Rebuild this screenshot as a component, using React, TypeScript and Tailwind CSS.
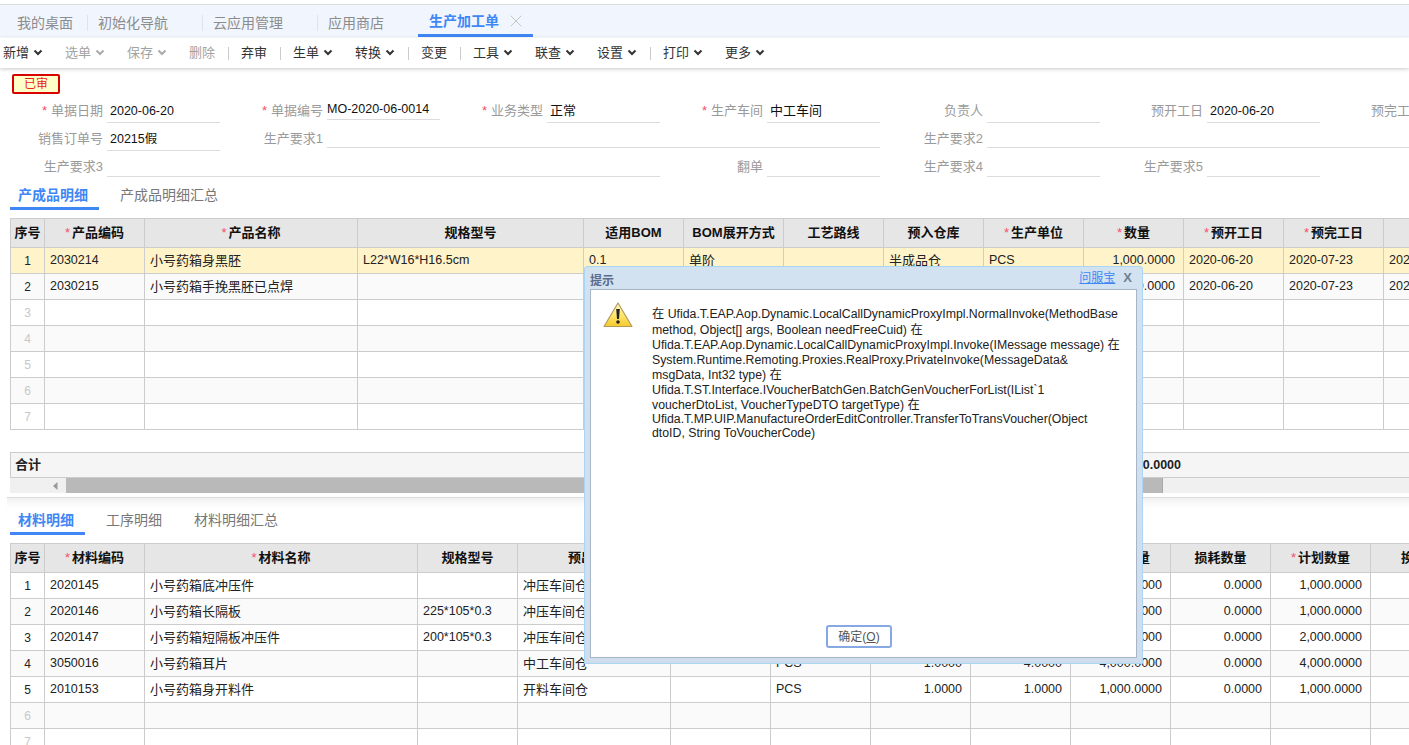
import React from "react";
import { X } from "lucide-react";

const FONT = "font-['Liberation_Sans','Noto_Sans_CJK_SC',sans-serif]";

const Chev = ({ c = "#333" }: { c?: string }) => (
  <svg width="10" height="7" viewBox="0 0 10 7" className="ml-[4px] mt-[-2px]">
    <path d="M1.5 1.5 L5 5 L8.5 1.5" fill="none" stroke={c} strokeWidth="2" />
  </svg>
);

const Sep = () => <span className="w-px h-[13px] bg-[#ccc] ml-[13px] mr-[12px]" />;

function Toolbar() {
  const items: [string, boolean, boolean, boolean][] = [
    ["新增", true, false, false],
    ["选单", true, true, false],
    ["保存", true, true, false],
    ["删除", false, true, true],
    ["弃审", false, false, true],
    ["生单", true, false, false],
    ["转换", true, false, true],
    ["变更", false, false, true],
    ["工具", true, false, false],
    ["联查", true, false, false],
    ["设置", true, false, true],
    ["打印", true, false, false],
    ["更多", true, false, false],
  ];
  return (
    <div className="relative z-10 h-[30px] bg-white flex items-center pl-[3px] shadow-[0_1px_4px_rgba(0,0,0,0.22)] mt-px">
      {items.map(([t, chev, dis, sep]) => (
        <React.Fragment key={t}>
          <span className={`flex items-center whitespace-nowrap text-[13px] leading-[20px] ${chev ? "w-[40px]" : "w-[26px]"} ${dis ? "text-[#a3a3a3]" : "text-[#333]"}`}>
            {t}
            {chev && <Chev c={dis ? "#aaa" : "#333"} />}
          </span>
          {sep ? <Sep /> : chev ? <span className="w-[22px]" /> : null}
        </React.Fragment>
      ))}
    </div>
  );
}

function TopTabs() {
  return (
    <div className="h-[33px] bg-[#f0f5fe] border-t border-[#dcdcdc] flex items-stretch text-[14px] text-[#8c8c8c]">
      <div className="pl-[17px] pr-[14px] flex items-center pt-[4px]">我的桌面</div>
      {["初始化导航", "云应用管理", "应用商店"].map((t) => (
        <div key={t} className="relative pl-[11px] pr-[34px] flex items-center pt-[4px] whitespace-nowrap">
          <span className="absolute left-0 top-[10px] w-px h-[16px] bg-[#dfe3ea]" />
          {t}
        </div>
      ))}
      <div className="w-[115px] h-[32px] pl-[11px] pt-[3px] border-b-[3px] border-[#3f87f5] flex items-center font-bold text-[#3f87f5] whitespace-nowrap">
        生产加工单
        <X size={20} strokeWidth={1.2} className="ml-[7px] text-[#c4c4c4]" />
      </div>
    </div>
  );
}

type FieldProps = { label: string; star?: boolean; value?: string; latin?: boolean; span?: string; shorter?: boolean; nopad?: boolean };

function Field({ label, star, value, latin, span = "", shorter, nopad }: FieldProps) {
  return (
    <div className={`flex items-start h-full ${span}`}>
      <div className="w-[103px] shrink-0 text-right text-[13px] text-[#9a9a9a] whitespace-nowrap leading-[22px]">
        {star && <span className="text-[#f4506a] mr-[4px]">*</span>}
        {label}
      </div>
      <div
        className={`ml-[4px] flex-1 border-b border-[#dcdcdc] whitespace-nowrap text-[#111] ${shorter ? "h-[20px] leading-[18px]" : "h-full leading-[22px]"} ${nopad ? "" : "pl-[3px]"} ${latin ? "text-[12.5px]" : "text-[13px]"}`}
      >
        {value}
      </div>
    </div>
  );
}

function Form() {
  return (
    <div className="mt-[6px] w-[1540px] grid grid-cols-[repeat(7,220px)] grid-rows-[23px_23px_21px] gap-y-[5px]">
      <Field label="单据日期" star value="2020-06-20" latin />
      <Field label="单据编号" star value="MO-2020-06-0014" latin shorter nopad />
      <Field label="业务类型" star value="正常" />
      <Field label="生产车间" star value="中工车间" />
      <Field label="负责人" />
      <Field label="预开工日" value="2020-06-20" latin />
      <Field label="预完工日" />

      <Field label="销售订单号" value="20215假" latin />
      <Field label="生产要求1" span="col-span-3" shorter />
      <Field label="生产要求2" span="col-span-3" shorter />

      <Field label="生产要求3" span="col-span-3" />
      <Field label="翻单" />
      <Field label="生产要求4" />
      <Field label="生产要求5" />
    </div>
  );
}

function SubTabs({ tabs, h }: { tabs: string[]; h: string }) {
  return (
    <div className={`ml-[10px] flex ${h}`}>
      {tabs.map((t, i) => (
        <div
          key={t}
          className={`flex items-end text-[14px] leading-[18px] pl-[8px] pr-[11px] pb-[3px] border-b-[3px] ${i === 0 ? "border-[#3f87f5] font-bold text-[#3f87f5]" : "ml-[13px] border-transparent text-[#777]"}`}
        >
          {t}
        </div>
      ))}
    </div>
  );
}

type Col = { t: string; star?: boolean; w: string };
type Cell = { v: string; right?: boolean; latin?: boolean };

const L = (v: string): Cell => ({ v, latin: true });
const R = (v: string): Cell => ({ v, latin: true, right: true });
const C = (v: string): Cell => ({ v });
const E: Cell = { v: "" };

function Grid({ cols, rows, total, width, hl }: { cols: Col[]; rows: Cell[][]; total: number; width: string; hl?: boolean }) {
  return (
    <div className="ml-[10px] mt-[8px] overflow-hidden">
      <table className={`table-fixed border-collapse ${width}`}>
        <colgroup>
          {cols.map((c, i) => (
            <col key={i} className={c.w} />
          ))}
        </colgroup>
        <thead>
          <tr className="h-[29px] bg-[#e6e6e6]">
            {cols.map((c, i) => (
              <th key={i} className="border border-[#ccc] text-[13px] font-bold text-[#111] whitespace-nowrap overflow-hidden p-0 text-center">
                {c.star && <span className="text-[#f4506a] font-normal mr-[2px]">*</span>}
                {c.t}
              </th>
            ))}
          </tr>
        </thead>
        <tbody>
          {Array.from({ length: total }).map((_, r) => {
            const row = rows[r];
            const bg = hl && r === 0 ? "bg-[#fff3c9]" : r % 2 === 1 ? "bg-[#fafafa]" : "bg-white";
            return (
              <tr key={r} className={`h-[26px] ${bg}`}>
                <td className={`border border-[#ccc] text-center text-[12px] p-0 ${row ? "text-[#222]" : "text-[#c8c8c8]"}`}>{r + 1}</td>
                {cols.slice(1).map((_, i) => {
                  const c = row?.[i] ?? E;
                  return (
                    <td
                      key={i}
                      className={`border border-[#ccc] whitespace-nowrap overflow-hidden text-[#222] p-0 ${c.right ? "text-right pr-[8px]" : "text-left pl-[5px]"} ${c.latin ? "text-[12.5px]" : "text-[13px]"}`}
                    >
                      {c.v}
                    </td>
                  );
                })}
              </tr>
            );
          })}
        </tbody>
      </table>
    </div>
  );
}

const cols1: Col[] = [
  { t: "序号", w: "w-[34px]" },
  { t: "产品编码", star: true, w: "w-[100px]" },
  { t: "产品名称", star: true, w: "w-[213px]" },
  { t: "规格型号", w: "w-[226px]" },
  { t: "适用BOM", w: "w-[100px]" },
  { t: "BOM展开方式", w: "w-[100px]" },
  { t: "工艺路线", w: "w-[100px]" },
  { t: "预入仓库", w: "w-[100px]" },
  { t: "生产单位", star: true, w: "w-[100px]" },
  { t: "数量", star: true, w: "w-[100px]" },
  { t: "预开工日", star: true, w: "w-[100px]" },
  { t: "预完工日", star: true, w: "w-[100px]" },
  { t: "", w: "w-[100px]" },
];

const rows1: Cell[][] = [
  [L("2030214"), C("小号药箱身黑胚"), L("L22*W16*H16.5cm"), L("0.1"), C("单阶"), E, C("半成品仓"), L("PCS"), R("1,000.0000"), L("2020-06-20"), L("2020-07-23"), L("2020-07-23")],
  [L("2030215"), C("小号药箱手挽黑胚已点焊"), E, L("0.1"), C("单阶"), E, C("半成品仓"), L("PCS"), R("2,000.0000"), L("2020-06-20"), L("2020-07-23"), L("2020-07-23")],
];

const cols2: Col[] = [
  { t: "序号", w: "w-[34px]" },
  { t: "材料编码", star: true, w: "w-[100px]" },
  { t: "材料名称", star: true, w: "w-[273px]" },
  { t: "规格型号", w: "w-[100px]" },
  { t: "预出仓库", w: "w-[153px]" },
  { t: "批号", w: "w-[100px]" },
  { t: "单位", w: "w-[100px]" },
  { t: "单耗", w: "w-[100px]" },
  { t: "倍数", w: "w-[100px]" },
  { t: "需求数量", star: true, w: "w-[100px]" },
  { t: "损耗数量", w: "w-[100px]" },
  { t: "计划数量", star: true, w: "w-[100px]" },
  { t: "换算率", w: "w-[100px]" },
];

const mat = (code: string, name: string, spec: string, wh: string, a: string, b: string, c: string, d: string): Cell[] => [
  L(code), C(name), L(spec), C(wh), E, L("PCS"), R(a), R(b), R(c), R("0.0000"), R(d),
];

const rows2: Cell[][] = [
  mat("2020145", "小号药箱底冲压件", "", "冲压车间仓", "1.0000", "1.0000", "1,000.0000", "1,000.0000"),
  mat("2020146", "小号药箱长隔板", "225*105*0.3", "冲压车间仓", "1.0000", "1.0000", "1,000.0000", "1,000.0000"),
  mat("2020147", "小号药箱短隔板冲压件", "200*105*0.3", "冲压车间仓", "1.0000", "2.0000", "2,000.0000", "2,000.0000"),
  mat("3050016", "小号药箱耳片", "", "中工车间仓", "1.0000", "4.0000", "4,000.0000", "4,000.0000"),
  mat("2010153", "小号药箱身开料件", "", "开料车间仓", "1.0000", "1.0000", "1,000.0000", "1,000.0000"),
];

function Warn() {
  return (
    <svg width="30" height="26" viewBox="0 0 30 26" className="shrink-0">
      <defs>
        <linearGradient id="wg" x1="0" y1="0" x2="0" y2="1">
          <stop offset="0" stopColor="#fff8c8" />
          <stop offset="0.55" stopColor="#fde468" />
          <stop offset="1" stopColor="#f5c92e" />
        </linearGradient>
      </defs>
      <path d="M15 1 L29 24.5 L1 24.5 Z" fill="url(#wg)" stroke="#b59a5c" strokeWidth="1.2" strokeLinejoin="round" />
      <path d="M13.2 7 H16.8 L16 17 H14 Z" fill="#222" />
      <circle cx="15" cy="20" r="1.8" fill="#222" />
    </svg>
  );
}

const lines: [string, string][] = [
  ["在 Ufida.T.EAP.Aop.Dynamic.LocalCallDynamicProxyImpl.NormalInvoke(MethodBase", "h-[16px] leading-[16px]"],
  ["method, Object[] args, Boolean needFreeCuid) 在", "h-[16px] leading-[16px]"],
  ["Ufida.T.EAP.Aop.Dynamic.LocalCallDynamicProxyImpl.Invoke(IMessage message) 在", "h-[14px] leading-[14px]"],
  ["System.Runtime.Remoting.Proxies.RealProxy.PrivateInvoke(MessageData&", "h-[16px] leading-[16px]"],
  ["msgData, Int32 type) 在", "h-[14px] leading-[14px]"],
  ["Ufida.T.ST.Interface.IVoucherBatchGen.BatchGenVoucherForList(IList`1", "h-[16px] leading-[16px]"],
  ["voucherDtoList, VoucherTypeDTO targetType) 在", "h-[14px] leading-[14px]"],
  ["Ufida.T.MP.UIP.ManufactureOrderEditController.TransferToTransVoucher(Object", "h-[14px] leading-[14px]"],
  ["dtoID, String ToVoucherCode)", "h-[14px] leading-[14px]"],
];

function Modal() {
  return (
    <div className="absolute left-[584px] top-[266px] w-[559px] h-[398px] z-20 border border-[#a9d6f2] rounded-t-[3px] bg-gradient-to-b from-[#d3e2f1] to-[#cfdded] flex flex-col px-[5px] pb-[5px]">
      <div className="h-[22px] shrink-0 flex items-center justify-between">
        <span className="text-[12px] leading-[14px] font-bold text-[#5b6b8c] mt-[6px]">提示</span>
        <span className="flex items-center">
          <span className="text-[12px] leading-[14px] text-[#3f87f5] underline">问服宝</span>
          <span className="text-[13px] leading-[14px] font-bold text-[#6f7f92] ml-[8px] mr-[5px]">X</span>
        </span>
      </div>
      <div className="flex-1 bg-white border border-[#a8b6c8] flex flex-col">
        <div className="flex pl-[12px] pt-[12px]">
          <Warn />
          <div className="ml-[19px] pt-[4px] text-[12.3px] text-[#222] whitespace-nowrap">
            {lines.map(([l, c]) => (
              <div key={l} className={c}>{l}</div>
            ))}
          </div>
        </div>
        <div className="mt-auto mb-[9px] flex justify-center pr-[9px]">
          <button className="w-[66px] h-[23px] pt-[1px] border-2 border-[#86a9e4] rounded-[3px] bg-white text-[12px] text-[#555]">
            确定(<span className="underline">O</span>)
          </button>
        </div>
      </div>
    </div>
  );
}

export default function App() {
  return (
    <div className={`relative w-[1409px] h-[745px] overflow-hidden bg-white ${FONT}`}>
      <div className="h-[4px]" />
      <TopTabs />
      <Toolbar />
      <div className="ml-[12px] mt-[6px] w-[48px] h-[20px] border-2 border-[#d90000] rounded-[2px] bg-[#ffffc8] text-[#e8231a] text-[12px] leading-[16px] text-center">已审</div>
      <Form />
      <SubTabs tabs={["产成品明细", "产成品明细汇总"]} h="h-[33px]" />
      <Grid cols={cols1} rows={rows1} total={7} width="w-[1473px]" hl />
      <div className="mt-[22px] ml-[10px] h-[26px] border-y border-l border-[#ccc] bg-[#f5f5f5] flex items-center justify-between w-[1399px]">
        <span className="ml-[4px] text-[13px] font-bold text-[#222]">合计</span>
        <span className="mr-[228px] text-[12.5px] font-bold text-[#222]">2,000.0000</span>
      </div>
      <div className="ml-[10px] h-[15px] flex bg-[#f0f0f0]">
        <div className="w-[56px] flex items-center justify-end pr-[8px]">
          <svg width="5" height="8" viewBox="0 0 5 8"><path d="M4.5 0 L0 4 L4.5 8 Z" fill="#999" /></svg>
        </div>
        <div className="w-[1097px] bg-[#b9b9b9] border-r border-[#a8a8a8]" />
      </div>
      <div className="ml-[7px] mt-[4px] h-[11px] border-t border-[#dcdcdc] bg-gradient-to-b from-[#f1f1f1] to-white" />
      <SubTabs tabs={["材料明细", "工序明细", "材料明细汇总"]} h="h-[27px]" />
      <Grid cols={cols2} rows={rows2} total={7} width="w-[1460px]" />
      <Modal />
    </div>
  );
}
